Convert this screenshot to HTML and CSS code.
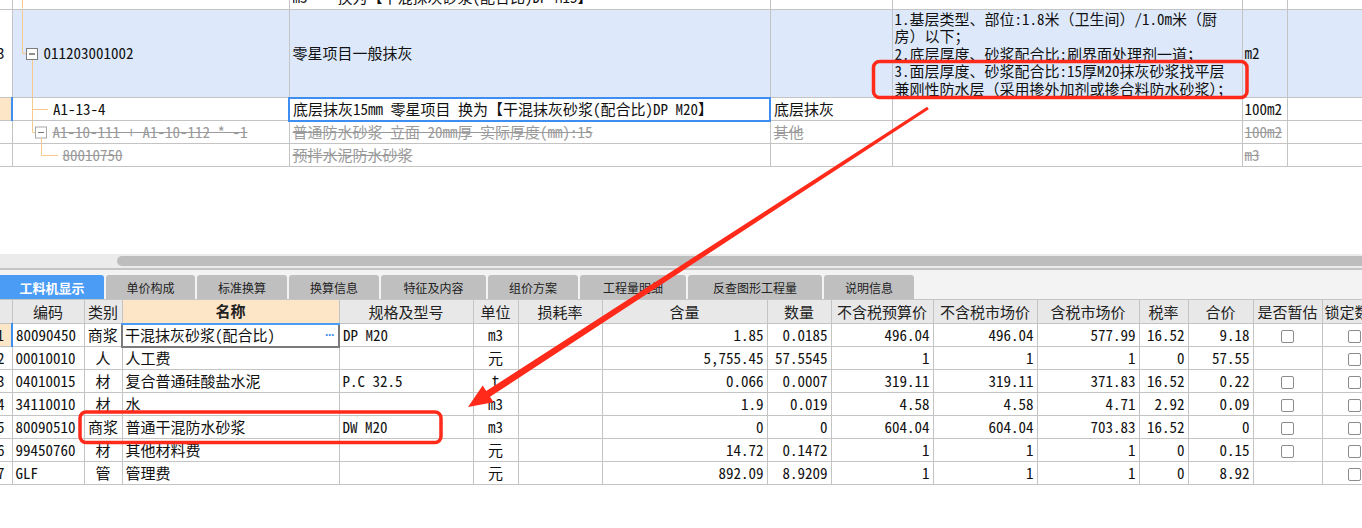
FILE: index.html
```html
<!DOCTYPE html>
<html lang="zh-CN">
<head>
<meta charset="utf-8">
<title>工料机显示</title>
<link rel="stylesheet" href="styles.css">
</head>
<body>
<div class="app">
  <section class="upper">
    <table class="grid top">
      <colgroup>
        <col class="w12"><col class="w277"><col class="w481"><col class="w122"><col class="w350"><col class="w45"><col class="w75">
      </colgroup>
      <tr class="r-a">
        <td class="num"></td>
        <td class="tree"><div class="tree-in"><svg width="20" height="8"><path d="M9.5 0V8" class="tl"/></svg></div></td>
        <td><div class="clip8"><span>m3 一 换为【干混抹灰砂浆(配合比)DP M15】</span></div></td>
        <td></td><td></td><td></td><td></td>
      </tr>
      <tr class="r-b">
        <td class="num"><span class="numtxt">3</span></td>
        <td class="tree"><div class="tree-in">
          <svg width="31" height="87"><path d="M9.5 0V43.5H13" class="tl"/><rect x="13.5" y="38.5" width="11" height="11" class="box"/><path d="M16 44H22" class="minus"/><path d="M19.5 50V87" class="tl"/></svg>
          <span>011203001002</span></div></td>
        <td>零星项目一般抹灰</td>
        <td></td>
        <td class="feat"><div class="feat-in">1.基层类型、部位:1.8米（卫生间）/1.0m米（厨<br>房）以下；<br>2.底层厚度、砂浆配合比:刷界面处理剂一道；<br>3.面层厚度、砂浆配合比:15厚M20抹灰砂浆找平层<br>兼刚性防水层（采用掺外加剂或掺合料防水砂浆）；</div></td>
        <td class="unit">m2</td>
        <td></td>
      </tr>
      <tr class="r-c">
        <td class="num cur"></td>
        <td class="tree"><div class="tree-in"><svg width="40" height="22"><path d="M19.5 0V22M19.5 11.5H35" class="tl"/></svg><span>A1-13-4</span></div></td>
        <td class="selcell">底层抹灰15mm 零星项目  换为【干混抹灰砂浆(配合比)DP M20】</td>
        <td>底层抹灰</td>
        <td></td>
        <td class="unit">100m2</td>
        <td></td>
      </tr>
      <tr class="r-d del">
        <td class="num"></td>
        <td class="tree"><div class="tree-in"><svg width="40" height="22"><path d="M19.5 0V11.5H22" class="tl"/><rect x="22.5" y="6" width="11" height="11" class="box off"/><path d="M25 11.5H31" class="minus off"/><path d="M28.5 17V22" class="tl"/></svg><s>A1-10-111 + A1-10-112 * -1</s></div></td>
        <td><s>普通防水砂浆 立面 20mm厚  实际厚度(mm):15</s></td>
        <td><s>其他</s></td>
        <td></td>
        <td class="unit"><s>100m2</s></td>
        <td></td>
      </tr>
      <tr class="r-e del">
        <td class="num"></td>
        <td class="tree"><div class="tree-in"><svg width="50" height="22"><path d="M28.5 0V11.5H45" class="tl"/></svg><s>80010750</s></div></td>
        <td><s>预拌水泥防水砂浆</s></td>
        <td></td>
        <td></td>
        <td class="unit"><s>m3</s></td>
        <td></td>
      </tr>
    </table>
  </section>

  <div class="hscroll"><div class="thumb"></div></div>

  <section class="lower">
    <nav class="tabs">
      <div class="tab active">工料机显示</div>
      <div class="tab">单价构成</div>
      <div class="tab">标准换算</div>
      <div class="tab">换算信息</div>
      <div class="tab">特征及内容</div>
      <div class="tab">组价方案</div>
      <div class="tab">工程量明细</div>
      <div class="tab">反查图形工程量</div>
      <div class="tab">说明信息</div>
    </nav>
    <div class="lower-grid">
      <table class="grid bottom">
        <colgroup>
          <col class="w12"><col class="w72"><col class="w38"><col class="w217"><col class="w134"><col class="w45"><col class="w84"><col class="w165"><col class="w64"><col class="w102"><col class="w104"><col class="w102"><col class="w49"><col class="w65"><col class="w69"><col class="w65">
        </colgroup>
        <tr class="head">
          <th class="num"></th><th>编码</th><th>类别</th><th class="selhead">名称</th><th>规格及型号</th><th>单位</th><th>损耗率</th><th>含量</th><th>数量</th><th>不含税预算价</th><th>不含税市场价</th><th>含税市场价</th><th>税率</th><th>合价</th><th>是否暂估</th><th class="cut">锁定数量</th>
        </tr>
        <tr>
          <td class="num cur"><span class="numtxt">1</span></td><td>80090450</td><td class="c">商浆</td>
          <td class="edit"><div class="edit-in"><span>干混抹灰砂浆(配合比)</span><span class="dots">···</span></div></td>
          <td>DP M20</td><td class="c">m3</td><td></td><td class="r">1.85</td><td class="r">0.0185</td><td class="r">496.04</td><td class="r">496.04</td><td class="r">577.99</td><td class="r">16.52</td><td class="r">9.18</td><td class="c"><span class="cb"></span></td><td class="c"><span class="cb"></span></td>
        </tr>
        <tr>
          <td class="num"><span class="numtxt">2</span></td><td>00010010</td><td class="c">人</td><td>人工费</td>
          <td></td><td class="c">元</td><td></td><td class="r">5,755.45</td><td class="r">57.5545</td><td class="r">1</td><td class="r">1</td><td class="r">1</td><td class="r">0</td><td class="r">57.55</td><td class="c"></td><td class="c"><span class="cb"></span></td>
        </tr>
        <tr>
          <td class="num"><span class="numtxt">3</span></td><td>04010015</td><td class="c">材</td><td>复合普通硅酸盐水泥</td>
          <td>P.C 32.5</td><td class="c">t</td><td></td><td class="r">0.066</td><td class="r">0.0007</td><td class="r">319.11</td><td class="r">319.11</td><td class="r">371.83</td><td class="r">16.52</td><td class="r">0.22</td><td class="c"><span class="cb"></span></td><td class="c"><span class="cb"></span></td>
        </tr>
        <tr>
          <td class="num"><span class="numtxt">4</span></td><td>34110010</td><td class="c">材</td><td>水</td>
          <td></td><td class="c">m3</td><td></td><td class="r">1.9</td><td class="r">0.019</td><td class="r">4.58</td><td class="r">4.58</td><td class="r">4.71</td><td class="r">2.92</td><td class="r">0.09</td><td class="c"><span class="cb"></span></td><td class="c"><span class="cb"></span></td>
        </tr>
        <tr>
          <td class="num"><span class="numtxt">5</span></td><td>80090510</td><td class="c">商浆</td><td>普通干混防水砂浆</td>
          <td>DW M20</td><td class="c">m3</td><td></td><td class="r">0</td><td class="r">0</td><td class="r">604.04</td><td class="r">604.04</td><td class="r">703.83</td><td class="r">16.52</td><td class="r">0</td><td class="c"><span class="cb"></span></td><td class="c"><span class="cb"></span></td>
        </tr>
        <tr>
          <td class="num"><span class="numtxt">6</span></td><td>99450760</td><td class="c">材</td><td>其他材料费</td>
          <td></td><td class="c">元</td><td></td><td class="r">14.72</td><td class="r">0.1472</td><td class="r">1</td><td class="r">1</td><td class="r">1</td><td class="r">0</td><td class="r">0.15</td><td class="c"><span class="cb"></span></td><td class="c"><span class="cb"></span></td>
        </tr>
        <tr>
          <td class="num"><span class="numtxt">7</span></td><td>GLF</td><td class="c">管</td><td>管理费</td>
          <td></td><td class="c">元</td><td></td><td class="r">892.09</td><td class="r">8.9209</td><td class="r">1</td><td class="r">1</td><td class="r">1</td><td class="r">0</td><td class="r">8.92</td><td class="c"></td><td class="c"><span class="cb"></span></td>
        </tr>
      </table>
    </div>
  </section>

  <svg class="annot" width="1362" height="528" viewBox="0 0 1362 528">
    <rect x="873.5" y="61.5" width="373.5" height="36" rx="6" class="mark"/>
    <rect x="80" y="412" width="361" height="30.5" rx="6" class="mark"/>
    <polygon class="arrow" points="927.2,106.7 486.2,391.0 482.7,385.5 468,407 493.6,402.3 490.0,396.8 928.8,109.3"/>
  </svg>
</div>
</body>
</html>
```

FILE: styles.css
```css
* { box-sizing: border-box; }
html, body { margin: 0; padding: 0; background: #fff; }
body {
  font-family: "Noto Sans Mono CJK SC", "Noto Sans CJK SC", "Liberation Mono", monospace;
  font-size: 15px;
  color: #111;
}
.app { position: relative; width: 1362px; height: 528px; overflow: hidden; }

/* generic grid */
.grid { border-collapse: collapse; table-layout: fixed; }
.grid td, .grid th {
  border: 1px solid #c4c4c4;
  padding: 0 3px;
  white-space: nowrap;
  overflow: hidden;
  font-weight: normal;
  line-height: 20px;
  vertical-align: middle;
  text-align: left;
}
.grid td.num, .grid th.num { border-left: 0; padding: 0; }
.numtxt { display: block; text-align: right; padding-right: 7px; margin-left: -20px; }

.w12 { width: 12px; } .w277 { width: 277px; } .w481 { width: 481px; } .w122 { width: 122px; }
.w350 { width: 350px; } .w45 { width: 45px; } .w75 { width: 75px; }
.w72 { width: 72px; } .w38 { width: 38px; } .w217 { width: 217px; } .w134 { width: 134px; }
.w84 { width: 84px; } .w165 { width: 165px; } .w64 { width: 64px; } .w102 { width: 102px; }
.w104 { width: 104px; } .w49 { width: 49px; } .w65 { width: 65px; } .w69 { width: 69px; }

/* upper grid */
.upper { height: 254px; overflow: hidden; }
.top { width: 1362px; }
.top tr:first-child td { border-top: 0; }
.r-a td { height: 9px; }
.r-b td { height: 88px; background: #dde9fb; }
.r-b td.num { background: #fff; }
.r-c td, .r-d td, .r-e td { height: 23px; }
.clip8 { height: 8px; overflow: hidden; }
.clip8 span { display: block; line-height: 20px; margin-top: -13px; }
.grid td.tree { padding: 0; }
.tree-in { display: flex; align-items: center; }
.tree-in svg { flex: none; display: block; }
.tl { stroke: #f7c98c; stroke-width: 1; fill: none; }
.box { fill: #fff; stroke: #7d7d7d; stroke-width: 1; }
.minus { stroke: #222; stroke-width: 1; }
.box.off { stroke: #a8a8a8; }
.minus.off { stroke: #777; }
.grid td.feat { vertical-align: top; padding: 0 2px; }
.feat-in { line-height: 17.5px; }
.grid td.unit { padding: 0 2px; }
.grid td.cur { background: #fde6c8; border-right: 2px solid #3d8ef0; }
.grid td.selcell { border: 2px solid #3d8ef0; }
.del td { color: #9a9a9a; }
.del s { text-decoration: line-through; text-decoration-thickness: 1px; }

/* scrollbar */
.hscroll {
  background: #ebebeb;
  padding: 2px 0 2px 117px;
  border-bottom: 2px solid #c4c4c4;
}
.thumb { height: 10px; background: #bdbdbd; border-radius: 5px 0 0 5px; }

/* tabs */
.tabs {
  display: flex;
  align-items: flex-end;
  gap: 2px;
  height: 29px;
  background: #f3f3f3;
  font-family: "Noto Sans CJK SC", sans-serif;
}
.tab {
  flex: none;
  height: 24px;
  display: flex;
  align-items: center;
  justify-content: center;
  background: #bfbfbf;
  color: #222;
  font-size: 12px;
  border-radius: 3px 3px 0 0;
}
.tab.active { background: #4a9cf5; color: #fff; font-weight: bold; font-size: 13px; border-radius: 0 3px 0 0; }
.tab:nth-child(1) { width: 104px; }
.tab:nth-child(2) { width: 89px; }
.tab:nth-child(3) { width: 90px; }
.tab:nth-child(4) { width: 90px; }
.tab:nth-child(5) { width: 105px; }
.tab:nth-child(6) { width: 90px; }
.tab:nth-child(7) { width: 106px; }
.tab:nth-child(8) { width: 134px; }
.tab:nth-child(9) { width: 90px; }

/* lower grid */
.lower-grid { width: 1362px; overflow: hidden; }
.bottom { width: 1387px; }
.bottom th { background: #e8e8e8; height: 24px; text-align: center; color: #222; padding: 0; }
.bottom th.selhead { background: #fde6c8; font-weight: bold; border-bottom: 2px solid #4a9cf5; }
.bottom th.cut { text-align: left; padding-left: 2px; }
.bottom td { height: 23px; padding: 0 3px; }
.bottom td.c { text-align: center; padding: 0; }
.bottom td.r { text-align: right; padding: 0 3px 0 0; }
.bottom td.edit { border: 2px solid #7b7b7b; padding: 0 3px 0 2px; }
.edit-in { display: flex; justify-content: space-between; align-items: center; }
.dots { color: #3d8ef0; font-family: "Liberation Sans", sans-serif; font-size: 12px; font-weight: bold; letter-spacing: -1px; margin-right: 1px; }
.cb {
  display: inline-block;
  width: 13px;
  height: 13px;
  border: 1px solid #8c8c8c;
  border-radius: 2px;
  background: #fff;
  vertical-align: middle;
}

/* annotations */
.annot { position: absolute; left: 0; top: 0; pointer-events: none; }
.mark { fill: none; stroke: #ff2a1a; stroke-width: 3.5; }
.arrow { fill: #ff2a1a; }
```
